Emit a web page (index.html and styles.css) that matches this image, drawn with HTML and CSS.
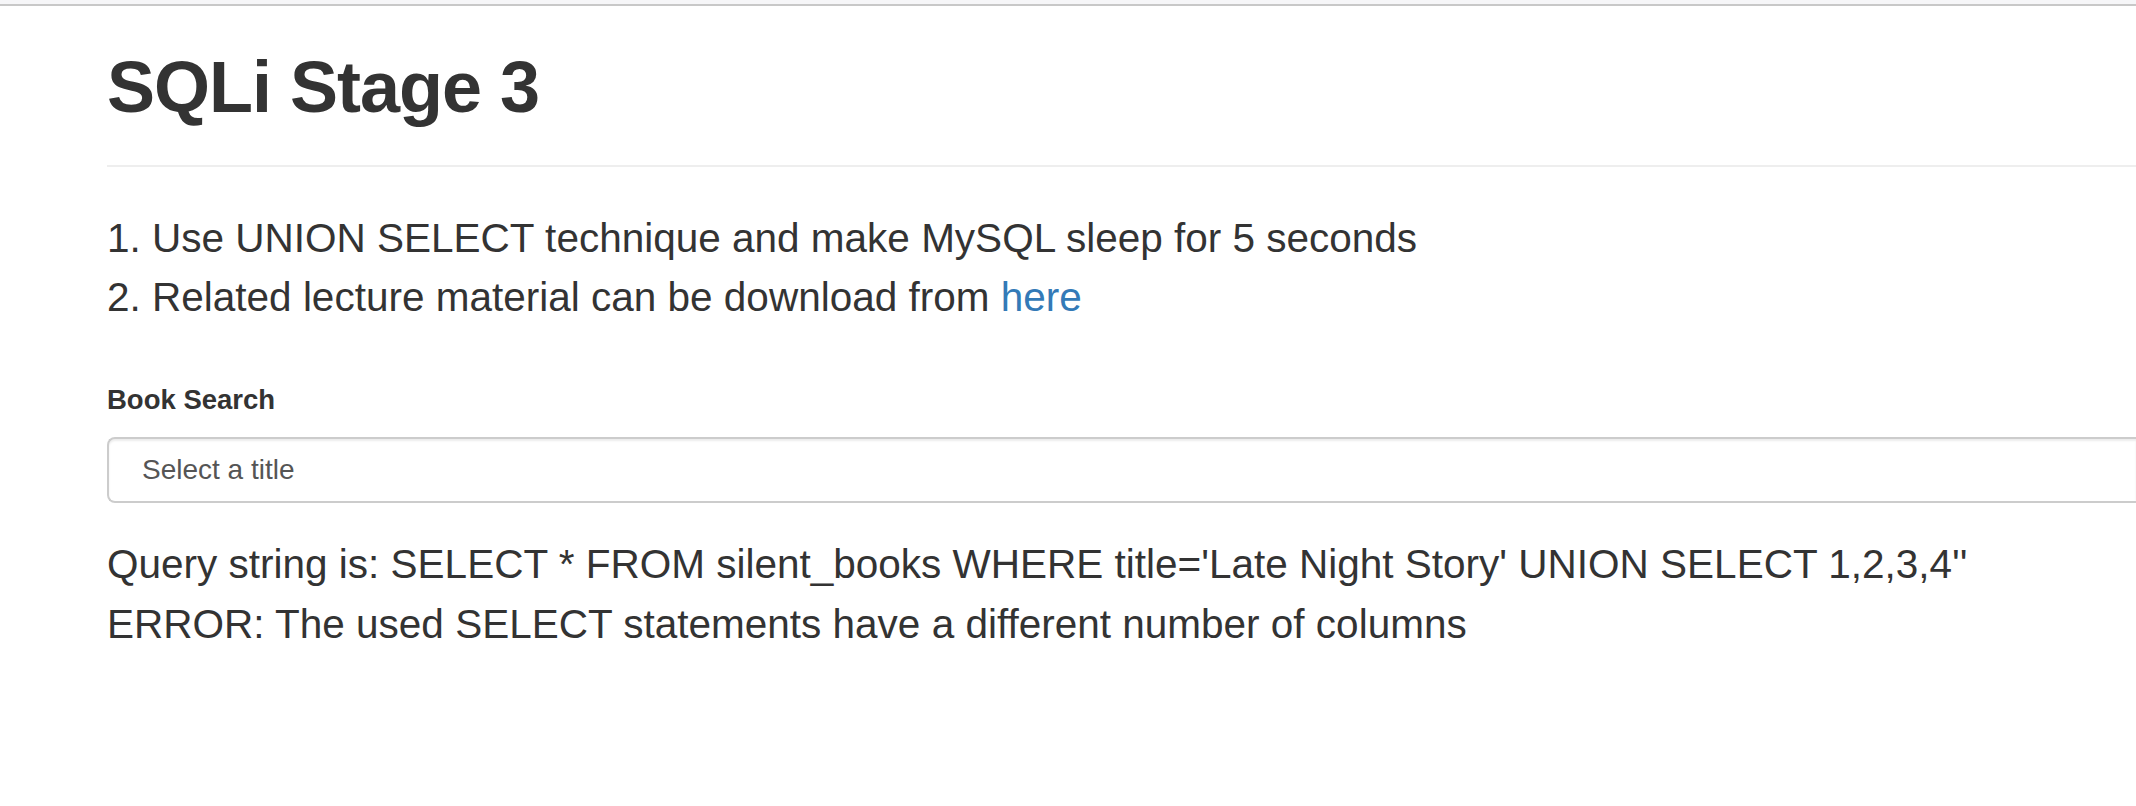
FILE: index.html
```html
<!DOCTYPE html>
<html lang="en">
<head>
<meta charset="utf-8">
<title>SQLi Stage 3</title>
<link rel="stylesheet" href="styles.css">
</head>
<body>
<div class="topbar"></div>
<div class="container">
  <div class="page-header">
    <h1>SQLi Stage 3</h1>
  </div>
  <div class="tasks">
    <div>1. Use UNION SELECT technique and make MySQL sleep for 5 seconds</div>
    <div>2. Related lecture material can be download from <a href="#">here</a></div>
  </div>
  <form class="form-group">
    <label class="label">Book Search</label>
    <div class="select-box">Select a title</div>
  </form>
  <div class="result">
    <div>Query string is: SELECT * FROM silent_books WHERE title='Late Night Story' UNION SELECT 1,2,3,4''</div>
    <div>ERROR: The used SELECT statements have a different number of columns</div>
  </div>
</div>
</body>
</html>
```

FILE: styles.css
```css
html, body {
  margin: 0;
  padding: 0;
  overflow: hidden;
  background: #ffffff;
}
body {
  font-family: "Liberation Sans", Arial, Helvetica, sans-serif;
  color: #333333;
  width: 2136px;
  height: 806px;
}
.topbar {
  height: 4px;
  background: #f6f6f8;
  border-bottom: 2px solid #c8c8c8;
}
.container {
  padding-left: 107px;
}
.page-header {
  padding-top: 42px;
  padding-bottom: 18px;
  border-bottom: 2px solid #eeeeee;
}
.page-header h1 {
  margin: 0 0 20px 0;
  font-size: 72px;
  line-height: 79px;
  font-weight: 700;
  letter-spacing: -1px;
}
.tasks {
  margin-top: 42px;
  font-size: 40.5px;
  line-height: 59px;
}
.tasks a {
  color: #337ab7;
  text-decoration: none;
}
.form-group {
  margin: 53px 0 0 0;
}
.label {
  display: block;
  font-size: 27.5px;
  line-height: 40px;
  font-weight: 700;
  margin-bottom: 17px;
}
.select-box {
  box-sizing: border-box;
  height: 66px;
  border: 2px solid #cccccc;
  border-right: none;
  border-radius: 8px 0 0 8px;
  box-shadow: inset 0 2px 2px rgba(0, 0, 0, 0.075);
  padding-left: 33px;
  font-size: 28px;
  line-height: 62px;
  color: #555555;
}
.result {
  margin-top: 31px;
  font-size: 40.5px;
  line-height: 60px;
}
```
